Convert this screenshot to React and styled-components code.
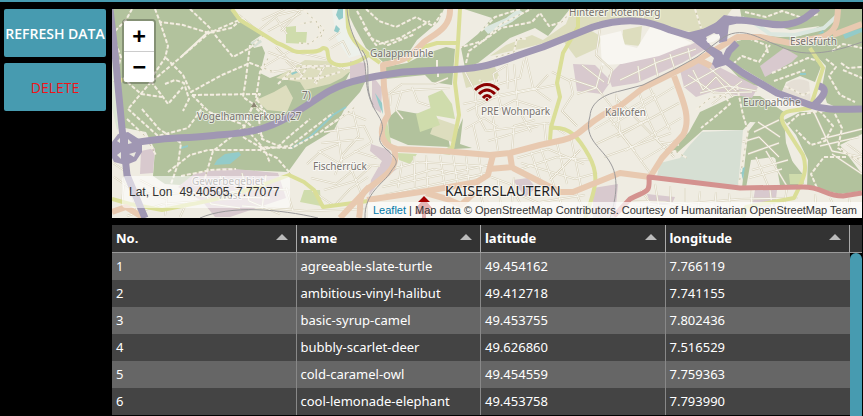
import React from "react";
import styled, { createGlobalStyle } from "styled-components";

const teal = "#479bb0";

const GlobalStyle = createGlobalStyle`
  * { box-sizing: border-box; }
  body { margin: 0; background: #000; }
`;

const Page = styled.div`
  display: flex;
  gap: 6px;
  height: 100vh;
  overflow: hidden;
  padding: 7px 1px 0 4px;
  border-top: 2px solid ${teal};
  background: #000;
  color: #fff;
  font-family: "Noto Sans", "Segoe UI", sans-serif;
`;

const Sidebar = styled.nav`
  display: flex;
  flex: none;
  flex-direction: column;
  gap: 6px;
  width: 102px;
`;

const ActionButton = styled.button`
  height: 48px;
  padding: 0;
  border: 0;
  border-radius: 2px;
  background: ${teal};
  color: ${(p) => (p.$danger ? "#f21318" : "#fff")};
  font: ${(p) => (p.$danger ? 400 : 600)} 14px "Open Sans", sans-serif;
  white-space: nowrap;
  cursor: pointer;
`;

const Main = styled.main`
  display: flex;
  flex: 1;
  flex-direction: column;
  gap: 7px;
  min-width: 0;
`;

const MapPanel = styled.section`
  position: relative;
  flex: none;
  height: 209px;
  overflow: hidden;
  background: #efece2;
  font-family: "Liberation Sans", Arial, sans-serif;
  font-size: 12px;
`;

const MapDrawing = styled.svg`
  display: block;
  width: 100%;
  height: 100%;
`;

const ZoomControl = styled.div`
  position: absolute;
  top: 10px;
  left: 10px;
  display: flex;
  flex-direction: column;
  border: 2px solid rgba(0, 0, 0, 0.25);
  border-radius: 4px;
  background-clip: padding-box;
`;

const ZoomButton = styled.button`
  width: 30px;
  height: ${(p) => (p.$divided ? 31 : 30)}px;
  padding: 0;
  border: 0;
  border-bottom: ${(p) => (p.$divided ? "1px solid #ccc" : "0")};
  border-radius: ${(p) => (p.$divided ? "2px 2px 0 0" : "0 0 2px 2px")};
  background: #fff;
  color: #000;
  font: bold 22px/30px "DejaVu Sans Mono", monospace;
  cursor: pointer;
`;

const Position = styled.div`
  position: absolute;
  bottom: 10px;
  left: 10px;
  display: flex;
  gap: 7px;
  padding: 0 11px 0 7px;
  border-radius: 4px;
  background: rgba(255, 255, 255, 0.58);
  color: #333;
  line-height: 32px;
`;

const Attribution = styled.div`
  position: absolute;
  right: 0;
  bottom: 0;
  padding: 0 5px;
  background: rgba(255, 255, 255, 0.7);
  color: #333;
  font-size: 11px;
  line-height: 16px;
  white-space: nowrap;
  a { color: #0078a8; text-decoration: none; }
`;

const TablePanel = styled.section`
  display: flex;
  flex: 1;
  min-height: 0;
  overflow: hidden;
`;

const DataTable = styled.table`
  flex: 1;
  align-self: flex-start;
  width: 100%;
  min-width: 0;
  border-collapse: separate;
  border-spacing: 0;
  table-layout: fixed;
  font-family: "Noto Sans", "Segoe UI", sans-serif;
  font-size: 13px;
  line-height: 27px;
`;

const HeaderCell = styled.th`
  height: 28px;
  padding: 0 4px;
  border-right: 1px solid #aaa;
  border-bottom: 1px solid #999;
  background: #333;
  text-align: left;
  font-weight: 700;
`;

const HeaderContent = styled.div`
  display: flex;
  align-items: center;
  justify-content: space-between;
  padding-right: 4px;
`;

const SortArrow = styled.span`
  margin-bottom: 4px;
  border: 6px solid transparent;
  border-top: 0;
  border-bottom-color: #bbb;
`;

const Row = styled.tr`
  background: #444;
  &:nth-child(odd) { background: #666; }
`;

const Cell = styled.td`
  height: 27px;
  padding: 0 4px;
  border-right: 1px solid #888;
  white-space: nowrap;
  &:last-child { border-right-color: transparent; }
`;

const ScrollRail = styled.div`
  display: flex;
  flex: none;
  flex-direction: column;
  width: 12px;
`;

const RailHead = styled.div`
  height: 28px;
  border-bottom: 1px solid #999;
  background: #333;
`;

const ScrollThumb = styled.div`
  flex: 1;
  border-radius: 6px 6px 0 0;
  background: ${teal};
`;

const C = {
  forest: "#b2c29d", farm: "#ddddbe", park: "#cfdcac", water: "#93cbc9",
  industry: "#d8c9ce", pale: "#f8f6f1", motorway: "#a097b3", primary: "#e8c9b0",
  secondary: "#dade97", red: "#d4928f", track: "#f3eee2", cemetery: "#d6dfd3",
};

const forests = [
  "M112 9H232L240 20 263 34 251 42 254 48 262 46 265 53 260 73 270 78 292 70 318 75 350 72 345 82 366 80 360 92 344 110 334 130 306 147 288 172 240 170 205 176 180 185 165 184 153 176 155 150 146 132 125 128 118 82Z",
  "M346 9H444L438 22 417 40 405 58 383 62 366 48 354 26Z",
  "M464 9H570L548 36 535 28 510 38 478 63 465 68 461 48 478 34 492 18Z",
  "M384 67 407 63 425 54 446 47 455 49 452 85 432 82 425 75 385 79Z",
  "M740 9H862V107L840 109 827 103 822 87 826 66 810 49 775 48 738 36 728 55 733 66 766 87 745 84 724 62 738 38 751 34 780 37 800 36 820 26 790 30 763 22 742 20Z",
  "M728 60 738 38 755 36 812 48 822 64 815 82 800 76 786 82 782 92Z",
  "M388 118 397 110 425 115 445 122 450 147 408 145 389 137Z",
  "M455 136 463 118 460 144 472 148 454 149Z",
  "M700 112 735 96 760 96 784 112 782 123 750 122 743 130 703 130 678 152 672 150 689 132Z",
  "M748 132 742 188 746 188 751 160 773 157 796 172 786 143 784 120 800 112 862 112V134L840 145 862 174V191L840 194 807 186 808 160 796 135 780 115 765 110Z",
  "M775 156H788L804 176 800 188 780 185Z",
];

const farms = [
  "M256 100 274 92 286 85 293 98 287 112 267 110Z", "M276 78 305 60 330 61 339 69 353 69 342 78 330 84 305 90 300 82Z",
  "M490 56 506 45 532 35 543 40 566 24 572 9H603L598 23 545 43Z",
  "M600 9H732L720 25 700 34 672 28 644 20 610 20 598 28Z",
  "M564 42 590 30 602 37 598 48 576 58Z", "M462 72 495 67 500 78 466 88Z",
  "M623 30 642 26 640 46 622 44Z", "M436 118 456 125 452 142 430 134Z",
];

const parks = [
  "M286 27 296 26 296 32 307 32 306 44 286 43Z", "M428 96 442 90 452 104 455 119 432 115Z",
  "M382 135 386 116 392 148 414 149 442 151 455 143 450 155 391 147Z", "M397 153 417 154 410 164 399 160Z",
  "M304 190 320 190 321 206 300 202Z", "M789 174 803 174 804 184 790 184Z", "M416 114 433 107 440 125 420 132Z",
];

const industry = [
  "M350 61 366 63 366 80 350 84Z", "M372 75 382 88 381 113 372 107Z",
  "M371 144 389 150 397 169 380 181 369 196 371 180 382 161 370 151Z",
  "M573 64 595 65 611 81 602 94 577 91Z", "M622 62 690 45 704 38 711 46 682 63 637 83 612 87 608 76Z",
  "M680 70 703 59 725 70 758 87 752 98 714 91 696 97 684 87Z",
  "M760 66 784 48 798 56 792 62 765 77Z", "M755 190 777 190 775 207 752 207Z",
  "M141 151 155 148 153 173 140 174Z", "M178 187 195 173 225 168 278 173 286 198 230 217 215 217 202 201Z",
  "M593 188 618 184 615 218 593 218Z", "M647 194 675 197 671 206 650 203Z", "M513 180 528 178 536 188 525 197Z",
];

const waters = [
  "M217 160 225 154 239 152 241 155 230 164 214 165Z", "M181 147 188 145 188 147 181 149Z", "M338 9H343V18L339 20 336 15Z",
  "M336 25 340 29 338 33 334 31Z", "M291 73 299 70 299 72 292 75Z", "M375 93 382 103 383 114 379 105Z",
  "M843 34 862 28V32L845 39Z", "M818 34 823 30 824 33Z", "M740 169 745 167 743 180Z", "M800 73H806V75H800Z",
];

const trails = [
  "M132 9 126 20 112 34 121 57 114 82", "M155 9 160 22 183 25 209 33 231 28 244 18",
  "M244 18 209 33 181 57 150 83 128 109", "M190 9 209 27 219 40 233 57 250 48 265 34",
  "M160 22 168 46 165 58 150 80 163 97 168 104 183 87", "M166 58 183 75 191 92 222 75 250 63 274 72",
  "M123 78 141 94 162 97", "M165 84 175 80 184 83 189 99 183 111", "M192 95 260 94 245 120 263 137",
  "M192 95 209 112 242 124 265 150 270 163", "M250 45 246 78 243 97 265 112", "M270 55 260 72 256 98 270 120",
  "M128 109 158 136 188 128 203 107", "M142 109 159 129 181 143 178 164 171 184", "M127 119 145 136 156 155",
  "M168 172 190 155 208 150 260 150 277 158 294 178", "M205 178 213 151 244 127 253 105 265 117",
  "M243 137 260 147 292 148 319 133 355 107", "M258 114 262 139 279 146 286 139 310 119",
  "M260 149 290 146 333 113", "M181 176 211 170 236 169", "M300 24 316 21 321 34 310 44 299 43",
  "M304 10 324 29 320 39", "M366 9 379 21 396 27 416 17 433 26 442 13", "M364 28 376 45 400 38 430 21",
  "M357 11 372 39 388 45 415 34", "M466 63 469 51 501 28 532 22 540 13 549 26 562 22 568 15",
  "M458 48 483 41 501 24 531 9", "M492 58 514 52 517 38 526 39", "M481 31 495 17 520 9",
  "M745 12 766 17 782 11 803 18 819 14", "M733 64 742 56 759 62 770 45", "M737 40 748 38 766 45 768 53",
  "M772 73 808 58 821 62", "M774 81 805 70", "M826 59 836 67 829 76 840 95 855 102", "M841 63 848 68 862 67",
  "M832 51 843 44 862 48", "M843 70 862 78", "M696 110 710 98 724 95 730 104 716 116 701 128",
  "M737 86 743 115 748 131 739 184", "M787 125 798 115 820 111 833 126 825 141 811 145 796 130",
  "M835 114 842 128 838 148 852 157 862 160", "M846 157 824 157 811 174 817 188", "M785 86 803 95 810 92",
  "M695 9 701 28", "M639 9 645 20 650 27", "M499 76 495 89 479 80", "M662 158 675 151 687 158",
  "M278 84 290 72 304 66 336 66", "M300 78 308 66 322 70 316 84", "M284 79 320 78 340 72",
];

const lanes = [
  "M263 67 290 51 310 55 330 60 345 70", "M268 52 302 65", "M276 47 300 72", "M270 72 326 65", "M286 61 303 76",
  "M239 15 258 31 278 15 304 9", "M262 20 285 9", "M268 31 301 13", "M281 31 300 11", "M276 18 287 34",
  "M325 66 314 83", "M331 48 343 41 350 55", "M329 40 340 32", "M390 106 391 94 410 90 450 88", "M387 95 402 84 434 84 448 78",
  "M402 90 396 110 403 119", "M412 87 418 102 430 106", "M465 72 475 91 477 114 486 131", "M475 91 520 78 524 60",
  "M467 111 499 95 536 88 548 75", "M502 111 493 74 507 65 508 89", "M514 64 518 109 531 132", "M526 57 533 88 551 101",
  "M463 104 555 85", "M486 131 548 123 565 134", "M488 141 538 126", "M498 151 492 112 515 100 550 111",
  "M512 151 514 126 535 120", "M544 122 546 142", "M465 129 484 118 498 127", "M479 150 473 124",
  "M552 72 570 81 573 94 562 111 577 126", "M570 79 597 88 612 107", "M577 94 596 88 602 66", "M582 65 604 82",
  "M600 29 596 55 612 70 608 84", "M620 80 658 62 696 49", "M638 66 640 81", "M654 58 658 77", "M670 54 675 70", "M688 48 691 62",
  "M616 94 620 133 635 151", "M639 92 648 119 659 142 679 145", "M649 86 670 130", "M612 125 674 87", "M617 137 679 103",
  "M625 151 681 118", "M640 161 681 137", "M609 117 650 173", "M617 99 674 157", "M594 129 655 94", "M596 144 647 120",
  "M604 157 671 133", "M688 75 714 93 752 92", "M693 70 703 90 716 77 733 97", "M706 65 736 91", "M684 87 720 67",
  "M712 104 742 81", "M700 93 728 86 757 91", "M388 170 419 162 483 166", "M390 182 434 169 479 178", "M402 162 398 188",
  "M414 156 415 187", "M426 155 428 190", "M440 155 445 188", "M453 155 458 186", "M466 156 469 182", "M479 156 482 180",
  "M382 187 489 165", "M384 195 487 173", "M517 158 548 149 584 164", "M518 170 557 157 590 160", "M531 152 543 189",
  "M541 149 556 191", "M557 143 567 184", "M571 138 581 187", "M521 163 575 179 597 173", "M550 180 580 150",
  "M520 195 541 204 549 216", "M491 177 510 184 521 205", "M478 184 486 216", "M498 179 502 218", "M514 177 511 215",
  "M540 202 585 195", "M558 194 566 218", "M575 190 586 216", "M324 132 364 126 372 142 340 161", "M321 143 364 139",
  "M327 127 348 113 366 120", "M353 111 359 136 343 154 335 175", "M318 151 352 171 361 193", "M307 164 321 151 341 143",
  "M311 178 336 184 361 164 380 166", "M324 190 355 181 371 166", "M335 205 350 189 368 177", "M337 126 342 163",
  "M354 151 377 158", "M113 163 125 171 122 204", "M114 177 130 188 137 211", "M140 180 165 193 203 196",
  "M144 192 167 199 165 216", "M127 216 163 204 230 199", "M185 189 205 197 251 188 290 190", "M198 180 211 204 240 208",
  "M220 176 229 197 270 198", "M242 173 249 201 280 214", "M266 175 262 209", "M187 202 180 217", "M242 206 306 211 365 209",
  "M286 187 293 211", "M312 191 333 205", "M742 142 759 137 779 157", "M748 154 779 143", "M754 132 779 120",
  "M758 122 780 137", "M752 170 788 160", "M749 178 782 169", "M756 157 769 188", "M766 151 788 188",
  "M814 112 832 151 862 157", "M821 139 862 129", "M820 146 859 137", "M832 154 862 174", "M841 148 862 166", "M847 144 862 155",
  "M629 201 665 202 705 210", "M641 190 650 203", "M655 184 660 214", "M670 186 671 208", "M685 188 685 215", "M700 191 698 212",
  "M716 192 714 216", "M729 193 731 214", "M751 190 752 216", "M770 190 773 214", "M787 188 783 212", "M633 208 741 199 798 198",
  "M815 194 817 218", "M830 198 840 218", "M849 198 851 214",
];

const secondary = [
  "M232 9 240 20 277 43C288 46 292 53 300 52S317 54 323 48C331 48 325 57 331 62S353 67 370 54", "M347 9 348 27C351 41 361 49 380 63",
  "M407 61 420 48 437 43 458 43", "M460 9 458 43 455 83 459 115 452 149", "M578 9V27L563 53 557 83 560 97 551 127 550 140",
  "M551 128C570 126 579 138 589 156S597 186 585 218", "M810 48 823 68 817 87 810 108 790 111C779 113 780 120 787 130L803 155C809 172 801 183 794 198L746 207 743 218",
  "M112 199 130 204 162 210 187 205C210 201 235 196 289 175L304 182 314 190 323 207 368 201", "M119 82 123 79",
];

const primary = [
  "M450 9C451 30 431 35 422 44S410 60 383 65L384 87 388 115C375 135 385 147 397 149L443 151 490 155 510 153 540 145 563 140C583 136 585 121 620 106L643 88 693 63 720 47 737 37 760 37 790 43 823 37C838 30 837 21 838 9",
  "M833 35 862 24", "M394 149C400 168 384 177 370 187S362 204 359 218", "M367 200 427 191 477 182 488 175 493 155",
  "M489 169 512 167 510 154M513 168 560 192H573L620 173 650 177 662 158 683 135C691 120 685 105 674 76", "M112 212 126 207 144 218M340 218 369 187",
  "M426 193 447 199 461 205 475 192", "M699 60 711 66",
];

const motorways = [
  "M110 9C114 42 116 60 118 86L122 128 127 175 145 218", "M124 145C158 137 178 139 208 136S260 134 290 116 325 91 345 84 385 75 403 72L440 70C490 69 493 63 543 47L593 27C632 15 653 23 670 30L693 37 710 50 743 73 777 93 810 105C827 111 842 109 862 109",
  "M689 36 705 32 723 23 737 20C761 20 782 32 805 18L818 8", "M737 43 729 51 724 62 714 65", "M819 86C830 89 822 98 813 106",
];

const rails = [
  "M347 9C349 36 363 51 365 66S365 95 378 115 370 135 386 149 396 163 390 173 364 193 365 218",
  "M362 50C374 67 362 82 373 105", "M590 116C591 101 606 94 620 91L643 85 677 68 697 57 720 40C741 23 761 40 777 45 802 58 829 54 862 42",
  "M590 116C583 140 602 147 611 164 620 180 615 202 610 218", "M200 218C230 205 280 209 318 218",
];

const labels = [
  ["Galappmühle", 370, 57], ["Hinterer Rotenberg", 569, 16], ["Eselsfürth", 790, 45], ["Europahöhe", 743, 106],
  ["Kalkofen", 605, 116], ["PRE Wohnpark", 481, 115], ["Vogelhammerkopf (27", 197, 120], ["7)", 302, 99],
  ["Fischerrück", 313, 170], ["Gewerbegebiet", 192, 185], ["West", 218, 199],
];

const Shapes = ({ items, ...rest }) => <g {...rest}>{items.map((d) => <path key={d} d={d} />)}</g>;

const CityMap = () => (
  <MapDrawing viewBox="112 9 750 209" preserveAspectRatio="xMidYMid slice" role="img" aria-label="Map of Kaiserslautern">
    <rect x="112" y="9" width="750" height="209" fill="#efece2" />
    <Shapes items={forests} fill={C.forest} />
    <Shapes items={farms} fill={C.farm} />
    <Shapes items={parks} fill={C.park} />
    <Shapes items={industry} fill={C.industry} />
    <path d="M112 40 119 83 124 122 117 130 112 108Z" fill="#dfe8d6" />
    <path d="M332 9 346 9 348 34 362 54 349 58 336 38Z" fill="#edf1eb" />
    <path d="M600 36 621 31 625 45 637 48 650 27 674 34 692 43 659 56 622 64 602 65Z" fill={C.pale} />
    <path d="M702 132 743 130 738 188 657 176 660 163 680 158 689 146Z" fill={C.cemetery} />
    <path d="M250 43 259 38 262 42 255 47Z" fill={C.cemetery} />
    <path d="M483 28 506 18 518 9 524 13 512 22 488 34Z" fill="#dce7df" />
    <path d="M742 18 756 24 770 34 795 35 824 28 838 15" fill="none" stroke="#dce7df" strokeWidth="4" />
    <path d="M782 92C785 80 800 76 809 82L811 103 796 104Z" fill="#e5dfd5" />
    <Shapes items={waters} fill={C.water} />
    <path d="M290 149 310 137 333 115 346 107" fill="none" stroke={C.water} strokeWidth="2" />
    <g fill="none" strokeLinejoin="round">
      <Shapes items={lanes} stroke="#d8d2bc" strokeWidth="2" />
      <Shapes items={lanes} stroke="#f8f6ef" strokeWidth="1" />
      <Shapes items={trails} stroke="#c8c4a8" strokeWidth="1" />
      <Shapes items={trails} stroke={C.track} strokeWidth="2" strokeDasharray="4 2" />
      <path d="M181 57 209 31M437 60V70M438 70V77" stroke={C.track} strokeWidth="2" />
      <Shapes items={secondary} stroke={C.secondary} strokeWidth="4" />
      <Shapes items={primary} stroke={C.primary} strokeWidth="6" />
      <Shapes items={motorways} stroke={C.motorway} strokeWidth="7" />
      <path d="M692 33 712 26 724 15 738 17 729 24 727 41 719 43 720 36 714 33 706 37 710 45 722 52 724 60 716 68 712 64 714 58 697 43Z" fill={C.motorway} />
      <path d="M706 40 712 35 719 34 720 38 713 42 708 43Z" fill={C.pale} />
      <path d="M112 142 118 134 128 132 142 141 142 152 136 161 126 165 114 162 112 158Z" fill={C.motorway} />
      <path d="M117 141 120 138V143ZM128 139 132 143 128 144ZM117 155 121 152 121 159ZM129 154 136 152 134 157Z" fill="#e9e8df" />
      <path d="M614 216 630 199C647 190 650 194 649 177L740 188 803 187C823 187 825 196 843 196L862 193" stroke={C.red} strokeWidth="5" />
      <Shapes items={rails} stroke="#9c9b9c" strokeWidth="1" />
    </g>
    <path d="m254 102 3 5h-6Z" fill="#8b8472" />
    <g fontFamily="Noto Sans, sans-serif" fontSize="10" paintOrder="stroke" stroke="#ffffff" strokeOpacity="0.65" strokeWidth="2" strokeLinejoin="round" fill="#77736e">
      {labels.map(([text, x, y]) => <text key={text} x={x} y={y}>{text}</text>)}
      <text x="445" y="196" fontSize="14" fill="#222">KAISERSLAUTERN</text>
    </g>
    <g fill="none" stroke="#8b0000" strokeWidth="3">
      <path d="M475 90Q487 79 499 90" />
      <path d="M479 94Q487 86 495 94" />
      <path d="M483 98Q487 93 491 98" />
      <circle cx="487" cy="99.5" r="1" strokeWidth="1" fill="#8b0000" />
    </g>
    <path d="M424 196 430 202H427L432 208H429L433 214H426V218H422V214H415L419 208H416L421 202H418Z" fill="#a40000" />
  </MapDrawing>
);

const columns = ["No.", "name", "latitude", "longitude"];
const rows = [
  ["1", "agreeable-slate-turtle", "49.454162", "7.766119"],
  ["2", "ambitious-vinyl-halibut", "49.412718", "7.741155"],
  ["3", "basic-syrup-camel", "49.453755", "7.802436"],
  ["4", "bubbly-scarlet-deer", "49.626860", "7.516529"],
  ["5", "cold-caramel-owl", "49.454559", "7.759363"],
  ["6", "cool-lemonade-elephant", "49.453758", "7.793990"],
];

export default function App() {
  return (
    <>
      <GlobalStyle />
      <Page>
        <Sidebar>
          <ActionButton type="button">REFRESH DATA</ActionButton>
          <ActionButton type="button" $danger>DELETE</ActionButton>
        </Sidebar>
        <Main>
          <MapPanel>
            <CityMap />
            <ZoomControl>
              <ZoomButton type="button" aria-label="Zoom in" $divided>+</ZoomButton>
              <ZoomButton type="button" aria-label="Zoom out">−</ZoomButton>
            </ZoomControl>
            <Position><span>Lat, Lon</span><span>49.40505, 7.77077</span></Position>
            <Attribution>
              <a href="#leaflet">Leaflet</a> | Map data © OpenStreetMap Contributors. Courtesy of Humanitarian OpenStreetMap Team
            </Attribution>
          </MapPanel>
          <TablePanel>
            <DataTable>
              <thead>
                <tr>
                  {columns.map((name) => (
                    <HeaderCell key={name} scope="col">
                      <HeaderContent>{name}<SortArrow /></HeaderContent>
                    </HeaderCell>
                  ))}
                </tr>
              </thead>
              <tbody>
                {rows.map((row) => (
                  <Row key={row[0]}>
                    {row.map((value) => <Cell key={value}>{value}</Cell>)}
                  </Row>
                ))}
              </tbody>
            </DataTable>
            <ScrollRail>
              <RailHead />
              <ScrollThumb />
            </ScrollRail>
          </TablePanel>
        </Main>
      </Page>
    </>
  );
}
